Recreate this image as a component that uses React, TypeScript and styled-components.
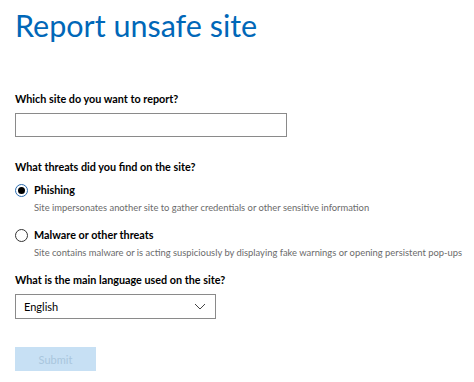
import React, { useState } from 'react'
import styled, { createGlobalStyle } from 'styled-components'

const GlobalStyle = createGlobalStyle`
    html, body {
        margin: 0;
        padding: 0;
        background: #fff;
    }
    body {
        font-family: Lato, "Open Sans", sans-serif;
        color: #000;
    }
`

const Page = styled.main`
    padding: 3px 15px 0;
    width: 474px;
    box-sizing: border-box;
`

const Title = styled.h1`
    margin: 0 0 44px;
    font-size: 30.5px;
    font-weight: 400;
    color: #0067b8;
    line-height: 44px;
`

const Field = styled.section<{ $gap?: number }>`
    display: flex;
    flex-direction: column;
    margin-bottom: ${(p) => p.$gap ?? 22}px;
`

const Label = styled.label`
    font-size: 10.8px;
    font-weight: 700;
    line-height: 16px;
    margin-bottom: 6px;
`

const TextInput = styled.input`
    box-sizing: border-box;
    width: 272px;
    height: 24px;
    border: 1px solid #8a8a8a;
    padding: 0 8px;
    font: inherit;
    font-size: 11px;
    outline: none;
`

const Options = styled.div`
    display: flex;
    flex-direction: column;
    gap: 11px;
    margin-top: 1px;
`

const Option = styled.label`
    display: grid;
    grid-template-columns: 19px 1fr;
    align-items: center;
    cursor: pointer;
`

const Circle = styled.span<{ $on: boolean }>`
    width: 13px;
    height: 13px;
    box-sizing: border-box;
    border-radius: 50%;
    border: 1px solid ${(p) => (p.$on ? '#2b6cb0' : '#333')};
    display: flex;
    align-items: center;
    justify-content: center;
    &::after {
        content: '';
        width: 7px;
        height: 7px;
        border-radius: 50%;
        background: #000;
        display: ${(p) => (p.$on ? 'block' : 'none')};
    }
`

const OptionName = styled.span`
    font-size: 10.8px;
    font-weight: 700;
    line-height: 16px;
`

const OptionHint = styled.span`
    grid-column: 2;
    margin-top: 2px;
    font-size: 9.4px;
    line-height: 16px;
    color: #6b6b6b;
    white-space: nowrap;
`

const SelectBox = styled.div`
    box-sizing: border-box;
    width: 201px;
    height: 25px;
    border: 1px solid #8a8a8a;
    display: flex;
    align-items: center;
    justify-content: space-between;
    padding: 0 9px 0 8px;
    font-size: 11px;
`

const SubmitButton = styled.button`
    width: 81px;
    height: 24px;
    border: none;
    background: #c7e0f4;
    color: #a9c6dd;
    font: inherit;
    font-size: 11px;
`

const threats = [
    {
        id: 'phishing',
        name: 'Phishing',
        hint: 'Site impersonates another site to gather credentials or other sensitive information',
    },
    {
        id: 'malware',
        name: 'Malware or other threats',
        hint: 'Site contains malware or is acting suspiciously by displaying fake warnings or opening persistent pop-ups',
    },
]

const App = () => {
    const [threat, setThreat] = useState('phishing')
    return (
        <>
            <GlobalStyle />
            <Page>
                <Title>Report unsafe site</Title>
                <Field>
                    <Label>Which site do you want to report?</Label>
                    <TextInput type="text" />
                </Field>
                <Field $gap={11}>
                    <Label>What threats did you find on the site?</Label>
                    <Options>
                        {threats.map((t) => (
                            <Option key={t.id} onClick={() => setThreat(t.id)}>
                                <Circle $on={threat === t.id} />
                                <OptionName>{t.name}</OptionName>
                                <OptionHint>{t.hint}</OptionHint>
                            </Option>
                        ))}
                    </Options>
                </Field>
                <Field $gap={28}>
                    <Label>What is the main language used on the site?</Label>
                    <SelectBox>
                        <span>English</span>
                        <svg width="12" height="7" viewBox="0 0 12 7" fill="none">
                            <path d="M1 1l5 5 5-5" stroke="#444" strokeWidth="1" />
                        </svg>
                    </SelectBox>
                </Field>
                <SubmitButton disabled>Submit</SubmitButton>
            </Page>
        </>
    )
}

export default App
